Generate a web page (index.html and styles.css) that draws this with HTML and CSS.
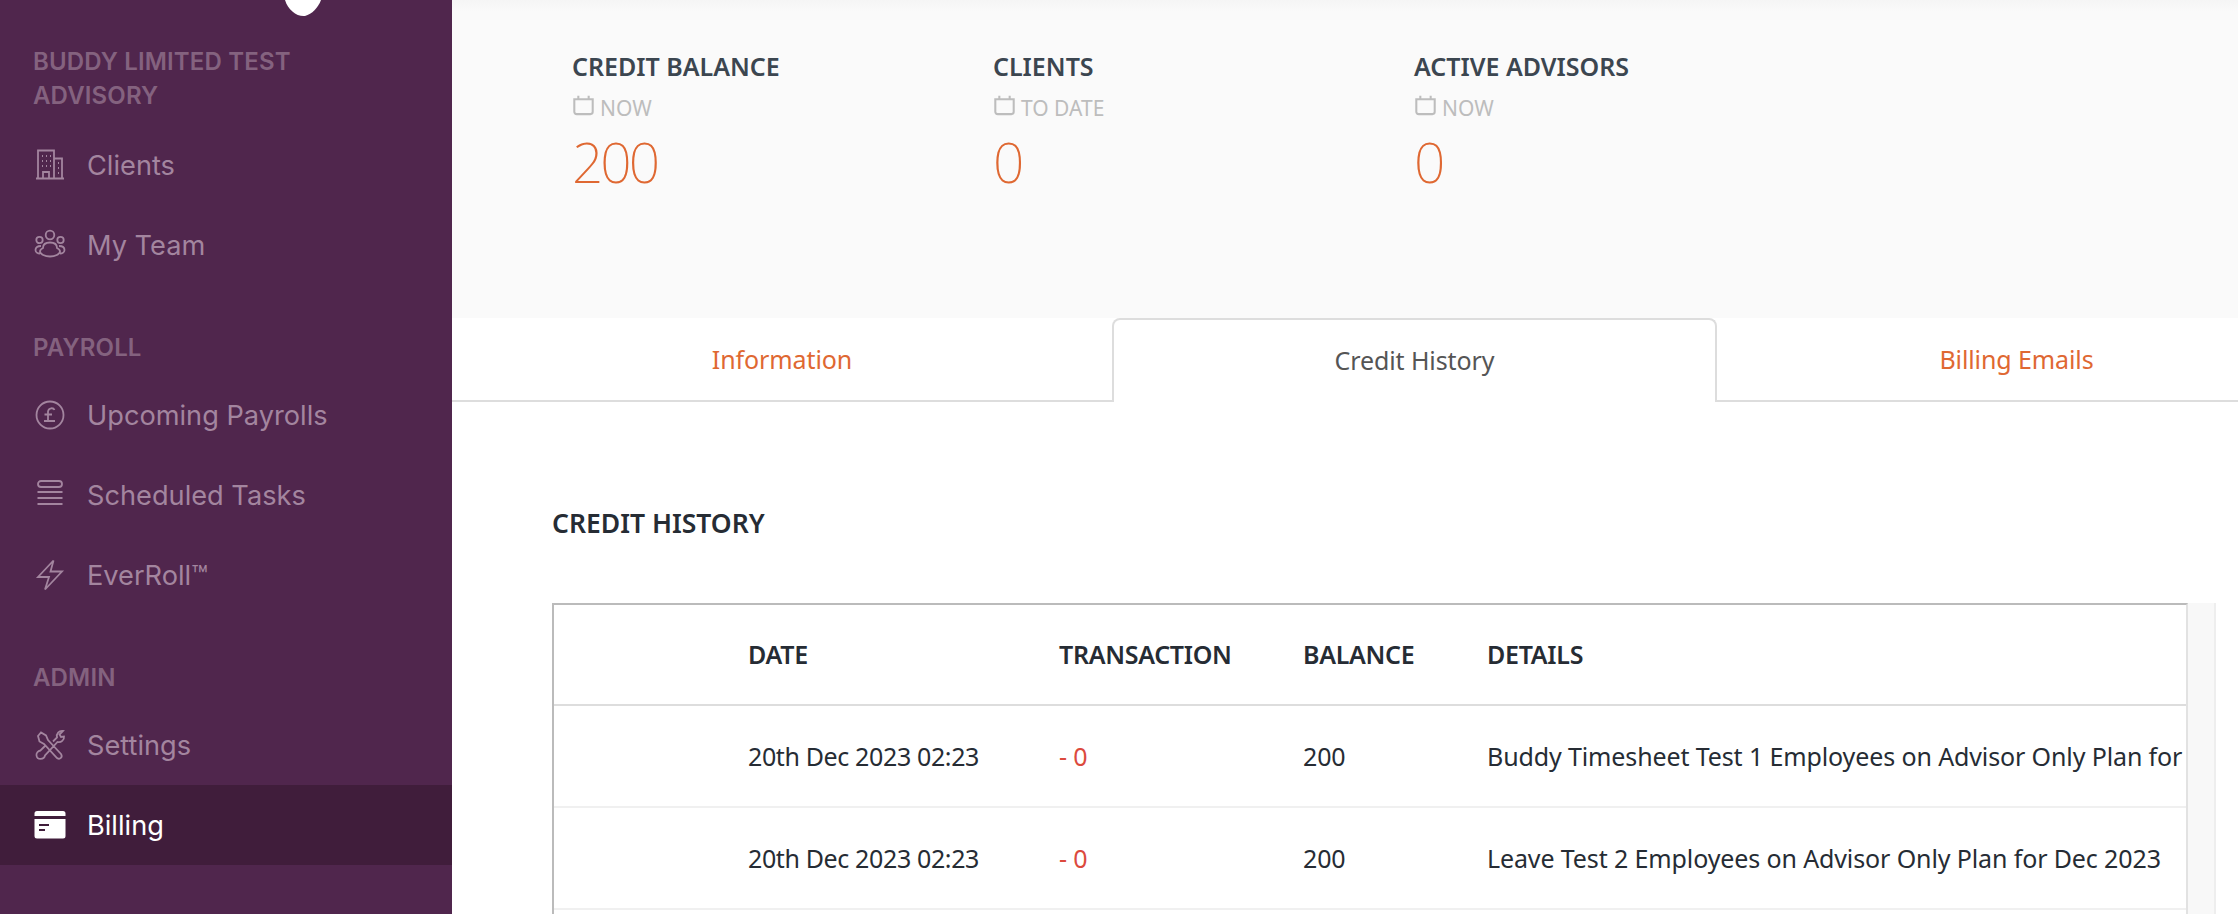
FILE: index.html
```html
<!DOCTYPE html>
<html lang="en">
<head>
<meta charset="utf-8">
<title>Billing</title>
<link rel="stylesheet" href="styles.css">
</head>
<body>
<div class="app">
  <aside class="sidebar">
    <svg class="logo-tail" width="36" height="17" viewBox="0 0 36 17"><path d="M0 0H36C33 8 27 14 20 16C12 17 3 10 0 0Z" fill="#fff"/></svg>
    <div class="group-label first">BUDDY LIMITED TEST ADVISORY</div>
    <a class="item"><svg class="ico" viewBox="0 0 32 32"><path d="M2 29.5H30M4 29.5V1.5H20V29.5M20 9.5H28V29.5M9 29.5V23H15V29.5M8 7h1M12 7h1M16 7h1M8 12h1M12 12h1M16 12h1M8 17h1M12 17h1M16 17h1M24 14h1M24 19h1M24 24h1"/></svg><span>Clients</span></a>
    <a class="item"><svg class="ico" viewBox="0 0 32 32"><circle cx="16" cy="6" r="4.3"/><circle cx="5.5" cy="11" r="3.2"/><circle cx="26.5" cy="11" r="3.2"/><path d="M9 19C9 15 12 13.5 16 13.5S23 15 23 19C25 20 26 21.5 26 22.5C26 25 21 27.5 16 27.5S6 25 6 22.5C6 21.5 7 20 9 19ZM7 17C3 17 1.500 19 1.500 21C1.500 23 3.500 24.500 6 24.500M25 17C29 17 30.500 19 30.500 21C30.500 23 28.500 24.500 26 24.500"/></svg><span>My Team</span></a>
    <div class="group-label">PAYROLL</div>
    <a class="item"><svg class="ico" viewBox="0 0 32 32"><circle cx="16" cy="16" r="13.500"/><path d="M20.500 11C19.500 8.500 14.500 8.500 14 12.500V21M10.500 15.500H18M10 22H21"/></svg><span>Upcoming Payrolls</span></a>
    <a class="item"><svg class="ico" viewBox="0 0 32 32"><rect x="4" y="2" width="24" height="6" rx="3"/><path d="M3.500 13H28.500M3.500 19H28.500M3.500 25H28.500"/></svg><span>Scheduled Tasks</span></a>
    <a class="item"><svg class="ico" viewBox="0 0 32 32"><path d="M19.500 1.500L4 18H15L11 30.500L28 12.500H16.500Z"/></svg><span>EverRoll™</span></a>
    <div class="group-label">ADMIN</div>
    <a class="item"><svg class="ico" viewBox="0 0 32 32"><path d="M4 7L7 3.500L12 6.500L14 11L27 25C29 28 26 31 23 29L10 15L5.500 12.500ZM19 12.500L23 8.500C22 4.500 25 1.500 29 2L25.500 5.500L27 8L30 7.500C30.500 11 27 14 23.500 13L11 26.500C10 31 3 31 2.500 26.500C2 24 4 22 6.500 21.500L11 17"/></svg><span>Settings</span></a>
    <a class="item active"><svg class="ico solid" viewBox="0 0 32 32"><path d="M3 2H29A2.500 2.500 0 0 1 31.500 4.500V7H.5V4.500A2.500 2.500 0 0 1 3 2ZM.5 10H31.500V27A2.500 2.500 0 0 1 29 29.500H3A2.500 2.500 0 0 1 .5 27ZM5 15V17H15V15ZM5 20V22H11V20Z" fill-rule="evenodd"/></svg><span>Billing</span></a>
  </aside>
  <main class="main">
    <section class="stats">
      <div class="stat">
        <h3 class="stat-title">CREDIT BALANCE</h3>
        <div class="stat-sub"><svg class="cal" viewBox="0 0 20 20"><path d="M2 4.500H18V15.500A2 2 0 0 1 16 17.500H4A2 2 0 0 1 2 15.500ZM5.500 1.500V4.500M14.500 1.500V4.500"/></svg>NOW</div>
        <div class="stat-value">200</div>
      </div>
      <div class="stat">
        <h3 class="stat-title">CLIENTS</h3>
        <div class="stat-sub"><svg class="cal" viewBox="0 0 20 20"><path d="M2 4.500H18V15.500A2 2 0 0 1 16 17.500H4A2 2 0 0 1 2 15.500ZM5.500 1.500V4.500M14.500 1.500V4.500"/></svg>TO DATE</div>
        <div class="stat-value">0</div>
      </div>
      <div class="stat">
        <h3 class="stat-title">ACTIVE ADVISORS</h3>
        <div class="stat-sub"><svg class="cal" viewBox="0 0 20 20"><path d="M2 4.500H18V15.500A2 2 0 0 1 16 17.500H4A2 2 0 0 1 2 15.500ZM5.500 1.500V4.500M14.500 1.500V4.500"/></svg>NOW</div>
        <div class="stat-value">0</div>
      </div>
    </section>
    <nav class="tabs">
      <a class="tab tab-info">Information</a>
      <a class="tab tab-active">Credit History</a>
      <a class="tab tab-emails">Billing Emails</a>
    </nav>
    <section class="panel">
      <h2 class="panel-title">CREDIT HISTORY</h2>
      <div class="table-wrap">
        <table class="table">
          <thead>
            <tr><th class="c0"></th><th class="c1">DATE</th><th class="c2">TRANSACTION</th><th class="c3">BALANCE</th><th>DETAILS</th></tr>
          </thead>
          <tbody>
            <tr><td></td><td class="date">20th Dec 2023 02:23</td><td class="neg">- 0</td><td>200</td><td>Buddy Timesheet Test 1 Employees on Advisor Only Plan for</td></tr>
            <tr><td></td><td class="date">20th Dec 2023 02:23</td><td class="neg">- 0</td><td>200</td><td>Leave Test 2 Employees on Advisor Only Plan for Dec 2023</td></tr>
            <tr><td></td><td></td><td></td><td></td><td></td></tr>
          </tbody>
        </table>
        <div class="scroll-track"></div>
      </div>
    </section>
  </main>
</div>
</body>
</html>
```
FILE: styles.css
```css
* { box-sizing: border-box; }
html, body { margin: 0; height: 100%; overflow: hidden; background: #fff; }
.app { display: flex; width: 2238px; height: 914px; overflow: hidden; font-family: "Noto Sans", sans-serif; }

.sidebar { position: relative; flex: 0 0 452px; background: #50264d; font-family: Inter, sans-serif; padding-top: 45px; }
.logo-tail { position: absolute; left: 285px; top: 0; }
.group-label { padding: 0 33px; margin: 46px 0 10px; font-size: 24px; line-height: 34px; font-weight: 600; color: #84627f; letter-spacing: .15px; height: 34px; }
.group-label.first { margin: 0 0 12px; height: 68px; width: 340px; }
.item { display: flex; align-items: center; height: 80px; padding-left: 34px; font-size: 27.2px; color: #a3859f; }
.item.active { background: #401d3b; color: #fff; }
.ico { width: 32px; height: 32px; margin-right: 21px; fill: none; stroke: currentColor; stroke-width: 1.8; flex: none; }
.ico.solid { fill: currentColor; stroke: none; }

.main { flex: 1; min-width: 0; overflow: hidden; }
.stats { display: flex; height: 318px; background: linear-gradient(#f5f5f5, #fafafa 12px); padding: 48px 0 0 120px; }
.stat { width: 421px; }
.stat-title { margin: 0; font-size: 25px; line-height: 36px; font-weight: 600; color: #3c4650; }
.stat-sub { display: flex; align-items: center; margin-top: 9px; font-size: 21px; line-height: 30px; color: #bdbdbd; }
.cal { width: 23px; height: 23px; margin: 0 5px 6px 0; fill: none; stroke: #bdbdbd; stroke-width: 1.8; }
.stat-value { margin-top: 3px; font-size: 55px; line-height: 72px; font-weight: 200; letter-spacing: -3px; color: #df6832; }

.tabs { display: flex; width: 1864px; height: 84px; }
.tab { display: flex; align-items: center; justify-content: center; font-size: 25px; letter-spacing: -.1px; color: #df6832; border-bottom: 2px solid #ddd; }
.tab-info { width: 660px; }
.tab-active { width: 605px; padding-bottom: 2px; color: #555; border: 2px solid #ddd; border-bottom: 0; border-radius: 8px 8px 0 0; }
.tab-emails { width: 599px; }

.panel { padding: 0 0 0 100px; }
.panel-title { margin: 0; padding-top: 103px; height: 201px; font-size: 26.5px; line-height: 36px; font-weight: 600; color: #262c34; }
.table-wrap { display: flex; width: 1664px; height: 320px; }
.table { width: 1636px; flex: none; table-layout: fixed; border-collapse: separate; border-spacing: 0; border-top: 2px solid #bbb; border-left: 2px solid #bbb; border-right: 2px solid #e2e2e2; font-size: 25px; letter-spacing: -.12px; color: #262c34; }
.table th { height: 101px; border-bottom: 2px solid #ddd; font-weight: 600; letter-spacing: -.3px; text-align: left; padding: 0 0 2px; white-space: nowrap; }
.table td { height: 102px; border-bottom: 2px solid #f0f0f0; padding: 0; white-space: nowrap; overflow: hidden; }
.table .date { letter-spacing: -.37px; }
.c0 { width: 194px; }
.c1 { width: 311px; }
.c2 { width: 244px; }
.c3 { width: 184px; }
.neg { color: #dc4a3d; }
.scroll-track { width: 28px; background: #f8f8f8; border-right: 2px solid #eee; }
```
